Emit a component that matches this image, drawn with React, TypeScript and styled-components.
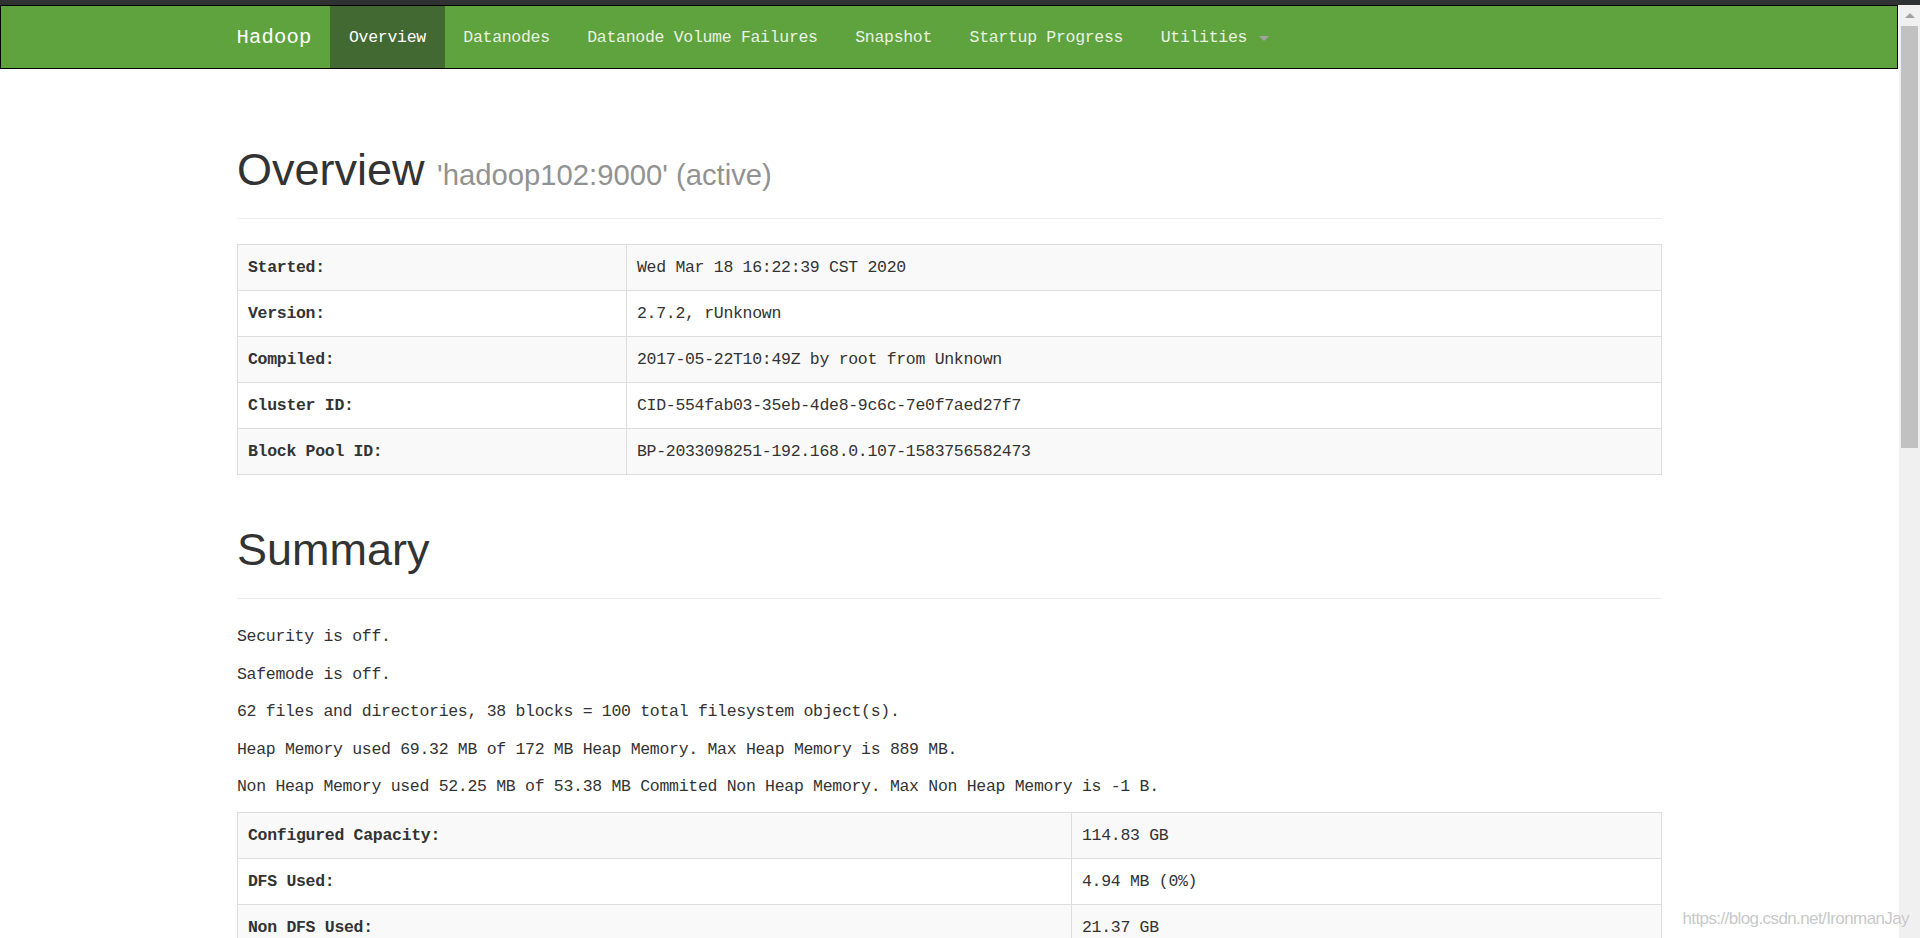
import styled, { createGlobalStyle } from "styled-components";

const MONO = `"Liberation Mono", "DejaVu Sans Mono", monospace`;
const SANS = `"Liberation Sans", Arial, sans-serif`;

const navItems = [
  "Overview",
  "Datanodes",
  "Datanode Volume Failures",
  "Snapshot",
  "Startup Progress",
];

const overviewRows: [string, string][] = [
  ["Started:", "Wed Mar 18 16:22:39 CST 2020"],
  ["Version:", "2.7.2, rUnknown"],
  ["Compiled:", "2017-05-22T10:49Z by root from Unknown"],
  ["Cluster ID:", "CID-554fab03-35eb-4de8-9c6c-7e0f7aed27f7"],
  ["Block Pool ID:", "BP-2033098251-192.168.0.107-1583756582473"],
];

const summaryLines = [
  "Security is off.",
  "Safemode is off.",
  "62 files and directories, 38 blocks = 100 total filesystem object(s).",
  "Heap Memory used 69.32 MB of 172 MB Heap Memory. Max Heap Memory is 889 MB.",
  "Non Heap Memory used 52.25 MB of 53.38 MB Commited Non Heap Memory. Max Non Heap Memory is -1 B.",
];

const capacityRows: [string, string][] = [
  ["Configured Capacity:", "114.83 GB"],
  ["DFS Used:", "4.94 MB (0%)"],
  ["Non DFS Used:", "21.37 GB"],
  ["DFS Remaining:", "93.46 GB (81.39%)"],
  ["Block Pool Used:", "4.94 MB (0%)"],
];

interface TableProps {
  rows: [string, string][];
  labelWidth: number;
}

function InfoTable({ rows, labelWidth }: TableProps) {
  return (
    <Table>
      <tbody>
        {rows.map(([label, value]) => (
          <Row key={label}>
            <LabelCell $width={labelWidth}>{label}</LabelCell>
            <Cell>{value}</Cell>
          </Row>
        ))}
      </tbody>
    </Table>
  );
}

function App() {
  return (
    <>
      <GlobalStyle />
      <Frame>
        <TopStrip />
        <Body>
          <Page>
            <Navbar>
              <NavContainer>
                <Brand>Hadoop</Brand>
                <NavList>
                  {navItems.map((item, i) => (
                    <NavItem key={item} $active={i === 0}>
                      {item}
                    </NavItem>
                  ))}
                  <NavItem>
                    Utilities <Caret />
                  </NavItem>
                </NavList>
              </NavContainer>
            </Navbar>

            <Container>
              <PageHeader $top={51}>
                <Title>
                  Overview <Small>'hadoop102:9000' (active)</Small>
                </Title>
              </PageHeader>
              <InfoTable rows={overviewRows} labelWidth={389} />

              <PageHeader $top={0}>
                <Title>Summary</Title>
              </PageHeader>
              {summaryLines.map((line) => (
                <Para key={line}>{line}</Para>
              ))}
              <InfoTable rows={capacityRows} labelWidth={834} />
            </Container>
          </Page>

          <Scrollbar>
            <ScrollArrow />
            <ScrollThumb />
          </Scrollbar>
        </Body>
        <Watermark>https://blog.csdn.net/IronmanJay</Watermark>
      </Frame>
    </>
  );
}

const GlobalStyle = createGlobalStyle`
  * {
    box-sizing: border-box;
  }

  html, body {
    margin: 0;
    height: 100%;
    overflow: hidden;
    background: #fff;
  }

  body {
    font-family: ${MONO};
    font-size: 16.5px;
    letter-spacing: -0.3px;
    color: #333;
  }
`;

const Frame = styled.div`
  position: relative;
  height: 100vh;

  display: flex;
  flex-direction: column;

  overflow: hidden;
`;

const TopStrip = styled.div`
  height: 5px;
  flex-shrink: 0;

  background-color: #2f3133;
`;

const Body = styled.div`
  flex: 1;
  min-height: 0;

  display: flex;
`;

const Page = styled.div`
  flex: 1;
  min-width: 0;

  overflow: hidden;
`;

const Navbar = styled.header`
  height: 64px;
  margin-right: 1px;

  background-color: #5fa33e;
  border: 1px solid #000;
`;

const NavContainer = styled.div`
  width: 1462.5px;
  height: 100%;
  margin: 0 auto;
  padding: 0 18.75px;

  display: flex;
  align-items: stretch;
`;

const Brand = styled.a`
  margin-left: -18.75px;
  padding: 0 18.75px;

  display: flex;
  align-items: center;

  font-size: 20.5px;
  letter-spacing: 0.2px;
  color: #fff;
`;

const NavList = styled.nav`
  display: flex;
  align-items: stretch;
`;

const NavItem = styled.a<{ $active?: boolean }>`
  padding: 0 18.75px;

  display: flex;
  align-items: center;
  white-space: pre;

  color: ${(props) => (props.$active ? "#fff" : "#eaf2e4")};
  background-color: ${(props) => (props.$active ? "#436933" : "transparent")};
`;

const Caret = styled.span`
  width: 0;
  height: 0;
  margin-left: 2.5px;
  margin-top: 2px;

  border-top: 5px solid #a4a4a4;
  border-left: 5px solid transparent;
  border-right: 5px solid transparent;
`;

const Container = styled.main`
  width: 1462.5px;
  margin: 0 auto;
  padding: 0 18.75px;
`;

const PageHeader = styled.div<{ $top: number }>`
  margin: ${(props) => props.$top}px 0 25px;
  padding: 25px 0 11px;

  border-bottom: 1px solid #eee;
`;

const Title = styled.h1`
  margin: 0 0 12.5px;

  font-family: ${SANS};
  font-size: 45px;
  font-weight: 400;
  line-height: 49.5px;
  letter-spacing: 0;
  color: #333;
`;

const Small = styled.small`
  font-size: 29.25px;
  line-height: 1;
  color: #929292;
`;

const Table = styled.table`
  width: 100%;
  margin-bottom: 25px;

  border-collapse: collapse;
  border-spacing: 0;
`;

const Row = styled.tr`
  &:nth-child(odd) {
    background-color: #f9f9f9;
  }
`;

const Cell = styled.td`
  padding: 10px;

  line-height: 25px;
  vertical-align: top;
  text-align: left;

  border: 1px solid #ddd;
`;

const LabelCell = styled(Cell).attrs({ as: "th" })<{ $width: number }>`
  width: ${(props) => props.$width}px;

  font-weight: bold;
`;

const Para = styled.p`
  margin: 0 0 12.5px;

  line-height: 25px;
`;

const Scrollbar = styled.div`
  width: 21px;
  flex-shrink: 0;
  padding: 0 2px;

  display: flex;
  flex-direction: column;

  background-color: #f0f0f0;
`;

const ScrollArrow = styled.div`
  height: 21px;

  display: flex;
  align-items: center;
  justify-content: center;

  &::after {
    content: "";
    width: 0;
    height: 0;

    border-bottom: 5px solid #a3a3a3;
    border-left: 5px solid transparent;
    border-right: 5px solid transparent;
  }
`;

const ScrollThumb = styled.div`
  height: 422px;

  background-color: #c1c1c1;
`;

const Watermark = styled.div`
  position: absolute;
  right: 11px;
  bottom: 9px;

  font-family: ${SANS};
  font-size: 17px;
  letter-spacing: -0.6px;
  color: rgba(185, 185, 185, 0.8);
  text-shadow: 0 0 1px #fff;
`;

export default App;
